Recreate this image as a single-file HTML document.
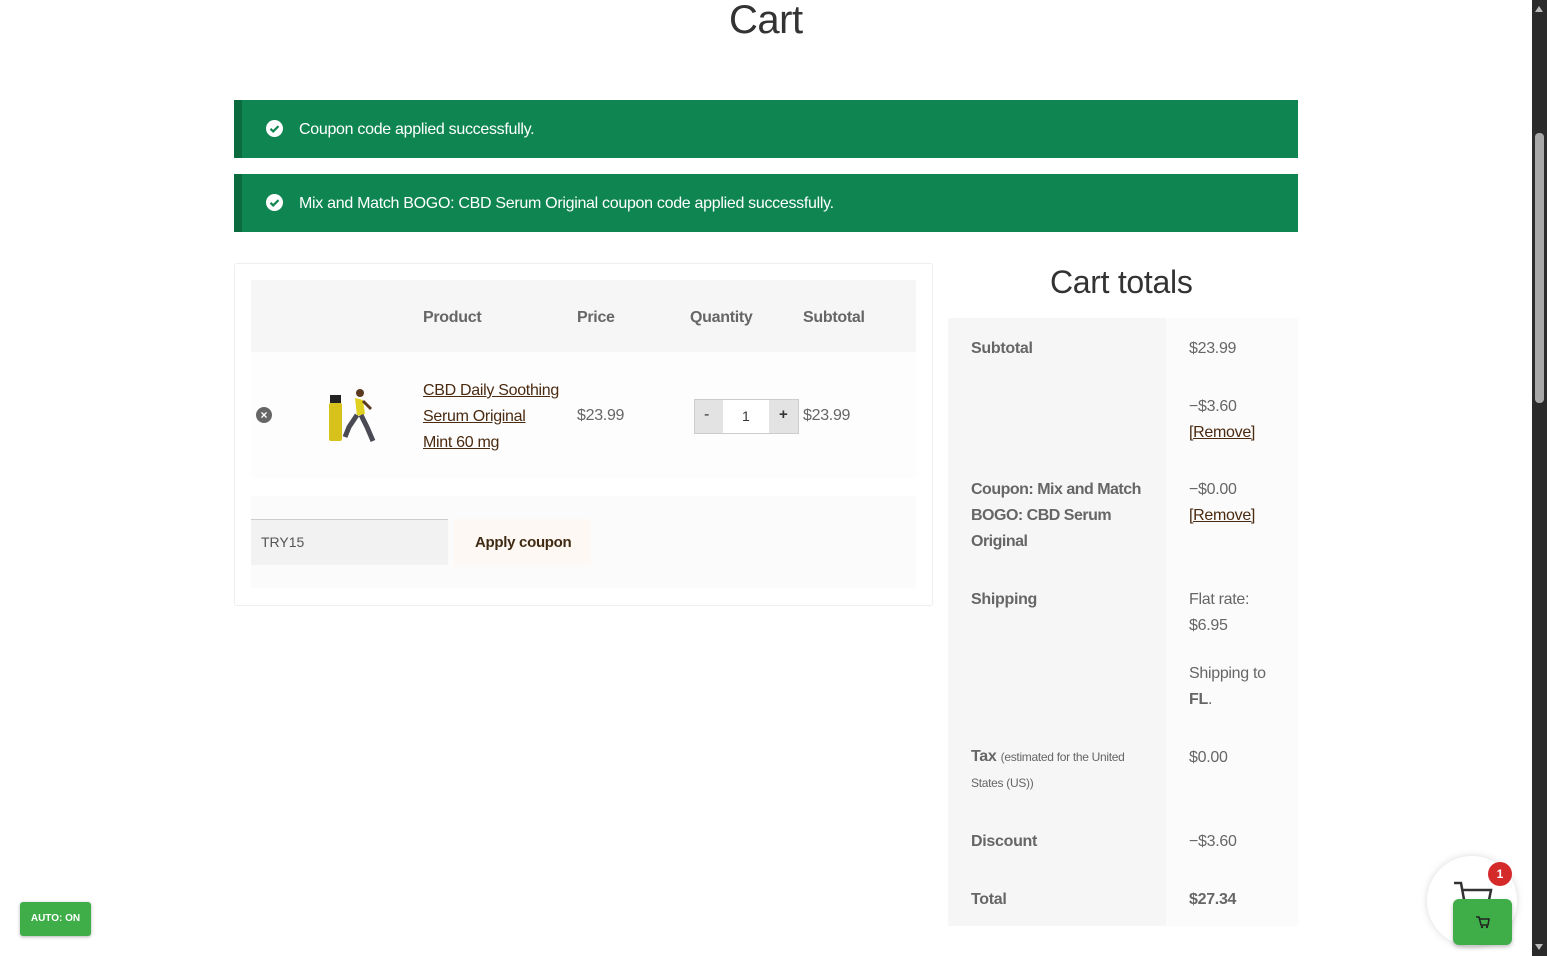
<!DOCTYPE html>
<html><head><meta charset="utf-8"><style>
*{margin:0;padding:0;box-sizing:border-box}
body{width:1547px;height:956px;overflow:hidden;background:#fff;font-family:"Liberation Sans",sans-serif;color:#666;position:relative}
.a{position:absolute}
.t{font-size:16px;letter-spacing:-0.3px}
.b{font-weight:bold}
.lnk{color:#4a2a10;text-decoration:underline}
.notice{left:234px;width:1064px;height:58px;background:#0f8651;border-left:8px solid #0a6b3f;color:#fff;font-size:16px;letter-spacing:-0.3px}
.notice .ic{position:absolute;left:24px;top:20px;width:17px;height:17px;border-radius:50%;background:#fff}
.notice span{position:absolute;left:57px;top:21px}
</style></head><body>
<div class="a" style="left:729px;top:-2px;font-size:40px;color:#333;letter-spacing:-0.5px">Cart</div>

<div class="a notice" style="top:100px"><div class="ic"><svg width="17" height="17" viewBox="0 0 17 17"><path d="M4.5 8.8l2.7 2.6 5.3-5.3" stroke="#0f8651" stroke-width="2.2" fill="none"/></svg></div><span>Coupon code applied successfully.</span></div>
<div class="a notice" style="top:174px"><div class="ic"><svg width="17" height="17" viewBox="0 0 17 17"><path d="M4.5 8.8l2.7 2.6 5.3-5.3" stroke="#0f8651" stroke-width="2.2" fill="none"/></svg></div><span>Mix and Match BOGO: CBD Serum Original coupon code applied successfully.</span></div>

<div class="a" style="left:234px;top:263px;width:699px;height:343px;border:1px solid #eee;border-radius:3px"></div>
<div class="a" style="left:251px;top:280px;width:665px;height:72px;background:#f6f6f6"></div>
<div class="a" style="left:251px;top:352px;width:665px;height:126px;background:#fdfdfd"></div>
<div class="a" style="left:251px;top:496px;width:665px;height:92px;background:#fbfbfb"></div>
<div class="a t b" style="left:423px;top:309px">Product</div>
<div class="a t b" style="left:577px;top:309px">Price</div>
<div class="a t b" style="left:690px;top:309px">Quantity</div>
<div class="a t b" style="left:803px;top:309px">Subtotal</div>
<div class="a" style="left:256px;top:407px;width:16px;height:16px;border-radius:50%;background:#666;color:#fff;font-size:12px;line-height:16px;text-align:center;font-weight:bold">×</div>
<svg class="a" style="left:325px;top:385px" width="55" height="62" viewBox="0 0 55 62">
<rect x="5" y="10" width="11" height="8" fill="#222"/><rect x="4" y="18" width="13" height="38" rx="2" fill="#d6c21a"/>
<circle cx="35" cy="8" r="4" fill="#5a3a20"/><path d="M30 13l8 2 2 14-8 2z" fill="#e0d020"/><path d="M32 30l-8 12-4 10M36 30l6 12 6 14" stroke="#4a4a55" stroke-width="5" fill="none"/><path d="M38 16l8 8" stroke="#5a3a20" stroke-width="3"/></svg>
<div class="a t" style="left:423px;top:378px;line-height:26px"><span class="lnk">CBD Daily Soothing</span><br><span class="lnk">Serum Original</span><br><span class="lnk">Mint 60 mg</span></div>
<div class="a t" style="left:577px;top:407px">$23.99</div>
<div class="a" style="left:694px;top:399px;width:105px;height:35px;border:1px solid #ccc;background:#e3e3e3"></div>
<div class="a" style="left:723px;top:400px;width:46px;height:33px;background:#fff"></div>
<div class="a" style="left:704px;top:406px;font-size:16px;color:#333">-</div>
<div class="a" style="left:742px;top:408px;font-size:14px;color:#333">1</div>
<div class="a" style="left:779px;top:406px;font-size:15px;color:#333;font-weight:bold">+</div>
<div class="a t" style="left:803px;top:407px">$23.99</div>
<div class="a" style="left:251px;top:519px;width:197px;height:46px;background:#f2f2f2;border-top:1px solid #ccc"></div>
<div class="a" style="left:261px;top:534px;font-size:14px;color:#555">TRY15</div>
<div class="a" style="left:454px;top:519px;width:137px;height:46px;background:#fdf8f3"></div>
<div class="a" style="left:475px;top:534px;font-size:15px;color:#3f2a14;font-weight:bold;letter-spacing:-0.3px">Apply coupon</div>

<div class="a" style="left:1050px;top:264px;font-size:32px;color:#333;letter-spacing:-0.3px">Cart totals</div>
<div class="a" style="left:948px;top:318px;width:218px;height:608px;background:#f6f6f6"></div>
<div class="a" style="left:1166px;top:318px;width:132px;height:608px;background:#fbfbfb"></div>
<div class="a t b" style="left:971px;top:340px">Subtotal</div>
<div class="a t" style="left:1189px;top:340px">$23.99</div>
<div class="a t" style="left:1189px;top:394px;line-height:26px">−$3.60<br><span class="lnk">[Remove]</span></div>
<div class="a t b" style="left:971px;top:477px;line-height:26px;letter-spacing:-0.5px">Coupon: Mix and Match<br>BOGO: CBD Serum<br>Original</div>
<div class="a t" style="left:1189px;top:477px;line-height:26px">−$0.00<br><span class="lnk">[Remove]</span></div>
<div class="a t b" style="left:971px;top:591px">Shipping</div>
<div class="a t" style="left:1189px;top:587px;line-height:26px">Flat rate:<br>$6.95</div>
<div class="a t" style="left:1189px;top:661px;line-height:26px">Shipping to<br><b>FL</b>.</div>
<div class="a t" style="left:971px;top:744px;line-height:26px"><b>Tax</b> <span style="font-size:12px">(estimated for the United<br>States (US))</span></div>
<div class="a t" style="left:1189px;top:749px">$0.00</div>
<div class="a t b" style="left:971px;top:833px">Discount</div>
<div class="a t" style="left:1189px;top:833px">−$3.60</div>
<div class="a t b" style="left:971px;top:891px">Total</div>
<div class="a t b" style="left:1189px;top:891px">$27.34</div>

<div class="a" style="left:20px;top:902px;width:71px;height:34px;background:#3fae49;border-radius:3px;color:#fff;font-size:10px;font-weight:bold;text-align:center;line-height:34px;box-shadow:0 1px 3px rgba(0,0,0,.3)">AUTO: ON</div>

<div class="a" style="left:1427px;top:856px;width:90px;height:90px;border-radius:50%;background:#fff;box-shadow:0 0 8px rgba(0,0,0,.15)"></div>
<svg class="a" style="left:1452px;top:880px" width="42" height="30" viewBox="0 0 42 30"><path d="M2 3h7l4 22M11 10h28l-3 15" stroke="#333" stroke-width="2.5" fill="none"/></svg>
<div class="a" style="left:1488px;top:862px;width:24px;height:24px;border-radius:50%;background:#d42a2a;color:#fff;font-size:12px;font-weight:bold;text-align:center;line-height:24px">1</div>
<div class="a" style="left:1453px;top:899px;width:59px;height:46px;border-radius:6px;background:#3fae49;box-shadow:0 2px 4px rgba(0,0,0,.25)"></div>
<svg class="a" style="left:1475px;top:915px" width="15" height="14" viewBox="0 0 15 14"><path d="M1 2h3l2 8h7l1-6H5" stroke="#222" stroke-width="1.5" fill="none"/><circle cx="7" cy="12" r="1.2" fill="#222"/><circle cx="12" cy="12" r="1.2" fill="#222"/></svg>

<div class="a" style="left:1532px;top:0;width:15px;height:956px;background:#2b2b2b"></div>
<div class="a" style="left:1535px;top:133px;width:9px;height:270px;background:#a8a8a8;border-radius:4px"></div>
<div class="a" style="left:1535px;top:944px;width:0;height:0;border-left:4px solid transparent;border-right:4px solid transparent;border-top:6px solid #bbb"></div>
<div class="a" style="left:1535px;top:6px;width:0;height:0;border-left:4px solid transparent;border-right:4px solid transparent;border-bottom:6px solid #bbb"></div>
</body></html>
